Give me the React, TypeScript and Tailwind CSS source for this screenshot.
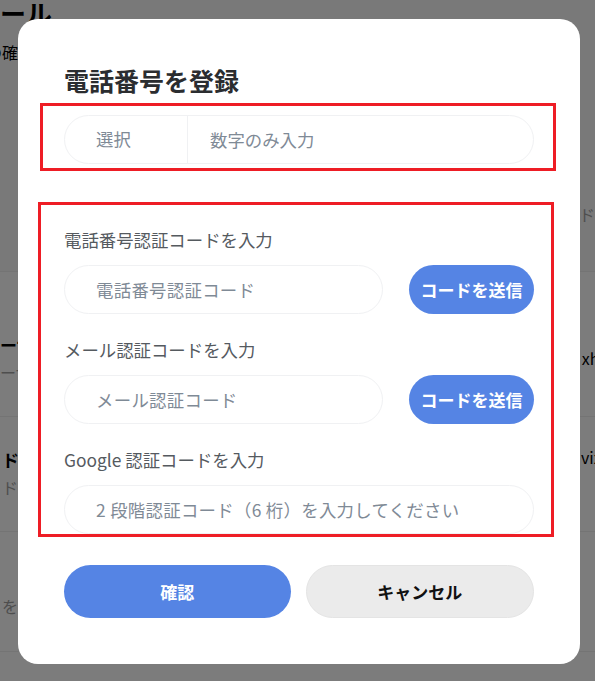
import type { ReactNode } from 'react'

const font = { fontFamily: '"Noto Sans CJK JP", "Noto Sans", sans-serif' }

function Field({ label, placeholder, action }: { label: string; placeholder: string; action?: string }) {
    return (
        <div className="flex flex-col">
            <div className="h-[24px] text-[17.4px] leading-[24px] text-[#555a5f]">{label}</div>
            <div className="mt-[13px] flex items-center gap-[26px]">
                <input
                    readOnly
                    placeholder={placeholder}
                    className="h-[49px] min-w-0 flex-1 rounded-full border border-[#f0f1f3] bg-white pl-[31px] text-[17.4px] tracking-[0.3px] outline-none placeholder:text-[#7f8a96]"
                />
                {action && (
                    <button
                        type="button"
                        className="h-[49px] w-[125px] shrink-0 rounded-full bg-[#5584e4] text-[17px] font-bold text-white"
                    >
                        {action}
                    </button>
                )}
            </div>
        </div>
    )
}

function Marked({ className, children }: { className: string; children: ReactNode }) {
    return <div className={`border-[3px] border-[#ee1d25] ${className}`}>{children}</div>
}

export default function App() {
    return (
        <div className="relative h-[681px] w-[595px] overflow-hidden bg-[#7c7c7c]" style={font}>
            {/* dimmed page behind the dialog */}
            <div className="flex flex-col">
                <div className="h-[272px] border-b border-[#747474] bg-[#797979]">
                    <div className="-ml-[26px] h-[26px] whitespace-nowrap text-[26px] font-bold leading-[26px] text-black">メール</div>
                    <div className="-ml-[78px] mt-[16px] h-[20px] whitespace-nowrap text-[16px] leading-[20px] text-black">アドレスの確認</div>
                    <div className="ml-[579px] mt-[142px] h-[20px] whitespace-nowrap text-[16px] leading-[20px] text-[#4e4e4e]">ドメイン</div>
                </div>
                <div className="flex h-[145px] items-start border-b border-[#747474] pt-[62px]">
                    <div className="flex flex-col">
                        <div className="h-[22px] whitespace-nowrap text-[17px] font-bold leading-[22px] text-black">ーザー名</div>
                        <div className="mt-[5px] h-[22px] whitespace-nowrap text-[16px] leading-[22px] text-[#4e4e4e]">ーザー名</div>
                    </div>
                    <div className="ml-[514px] mt-[13px] whitespace-nowrap text-[16px] leading-[22px] text-black">xh3</div>
                </div>
                <div className="flex h-[115px] items-start border-b border-[#747474] pt-[32px]">
                    <div className="flex flex-col">
                        <div className="ml-[2px] h-[22px] whitespace-nowrap text-[17px] font-bold leading-[22px] text-black">ド設定</div>
                        <div className="ml-[2px] mt-[5px] h-[22px] whitespace-nowrap text-[16px] leading-[22px] text-[#4e4e4e]">ド設定</div>
                    </div>
                    <div className="ml-[528px] mt-[-3px] whitespace-nowrap text-[16px] leading-[22px] text-black">vix</div>
                </div>
                <div className="h-[120px] border-b border-[#747474] pt-[63px]">
                    <div className="ml-[2px] whitespace-nowrap text-[16px] leading-[22px] text-[#4e4e4e]">を変更</div>
                </div>
            </div>

            {/* dialog */}
            <div className="absolute left-[18px] top-[19px] flex h-[645px] w-[562px] flex-col rounded-[20px] bg-white px-[46px] pt-[45px]">
                <h2 className="h-[32px] text-[25px] font-bold leading-[32px] text-[#2b2d30]">電話番号を登録</h2>

                <Marked className="-ml-[24px] -mr-[22px] mt-[7px] pb-[4px] pl-[21px] pr-[19px] pt-[9px]">
                    <div className="flex h-[49px] items-center rounded-full border border-[#f0f1f3]">
                        <div className="flex h-full w-[123px] shrink-0 items-center border-r border-[#f0f1f3] pl-[31px] text-[17.4px] text-[#7f8a96]">
                            選択
                        </div>
                        <input
                            readOnly
                            placeholder="数字のみ入力"
                            className="h-full min-w-0 flex-1 rounded-r-full bg-transparent pl-[22px] text-[17.4px] outline-none placeholder:text-[#7f8a96]"
                        />
                    </div>
                </Marked>

                <Marked className="-ml-[26px] -mr-[20px] mt-[31px] flex h-[335px] flex-col gap-[24px] overflow-hidden pl-[23px] pr-[17px] pt-[23px]">
                    <Field label="電話番号認証コードを入力" placeholder="電話番号認証コード" action="コードを送信" />
                    <Field label="メール認証コードを入力" placeholder="メール認証コード" action="コードを送信" />
                    <Field label="Google 認証コードを入力" placeholder="2 段階認証コード（6 桁）を入力してください" />
                </Marked>

                <div className="mt-[28px] flex gap-[15px]">
                    <button type="button" className="h-[53px] flex-1 rounded-full bg-[#5584e4] text-[17px] font-bold text-white">
                        確認
                    </button>
                    <button
                        type="button"
                        className="h-[53px] flex-1 rounded-full border border-[#e4e4e4] bg-[#ebebeb] text-[17px] font-bold text-[#111]"
                    >
                        キャンセル
                    </button>
                </div>
            </div>
        </div>
    )
}
